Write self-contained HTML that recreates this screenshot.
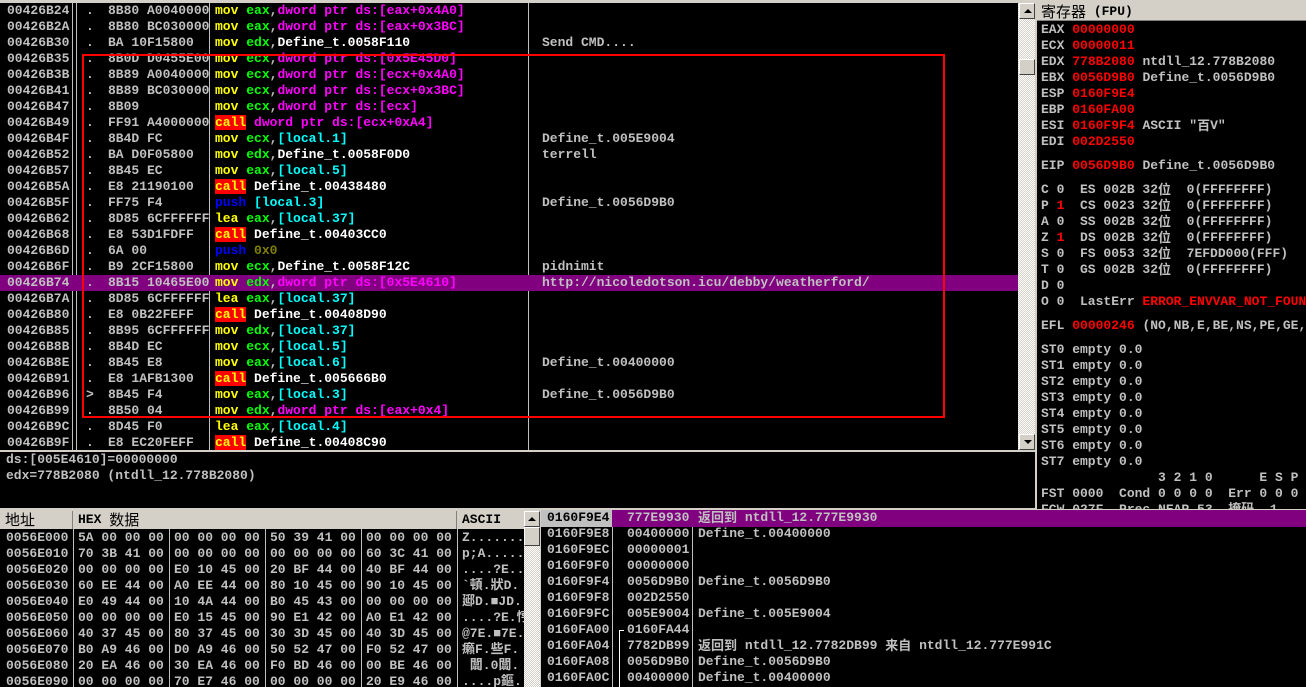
<!DOCTYPE html>
<html><head><meta charset="utf-8"><style>
*{margin:0;padding:0;box-sizing:border-box}
body{width:1306px;height:687px;background:#d4d0c8;position:relative;overflow:hidden;font-family:"Liberation Mono","Noto Sans CJK SC",monospace;font-size:13px;font-weight:bold;color:#c0c0c0}
.a{position:absolute}
.r{position:absolute;height:16px;line-height:16px;white-space:pre;overflow:hidden}
.r span,.r b{position:absolute;top:0;white-space:pre;font-weight:bold}
.bk{background:#000}
.vl{position:absolute;width:1px;background:#c0c0c0}
.y{color:#ff0}.g{color:#0f0}.m{color:#f0f}.c{color:#0ff}.w{color:#fff}.bl{color:#00f}.o{color:#808000}.rd{color:#f00}
.call{background:#f00;color:#ff0}
.hatch{background:repeating-conic-gradient(#fff 0 25%,#d4d0c8 0 50%) 0 0/2px 2px}
.btn{position:absolute;background:#d4d0c8;border:1px solid;border-color:#fff #404040 #404040 #fff}
.cj{font-family:"Noto Sans CJK SC","WenQuanYi Zen Hei",sans-serif;font-weight:normal;line-height:1;vertical-align:top}
</style></head><body>

<div class="a bk" style="left:0;top:3px;width:1018px;height:447px;overflow:hidden">
<div class="vl" style="left:72px;top:0;height:447px"></div>
<div class="vl" style="left:76px;top:0;height:447px"></div>
<div class="vl" style="left:209px;top:0;height:447px"></div>
<div class="vl" style="left:528px;top:0;height:447px"></div>
<div id="dis"></div>
</div>
<div class="a" style="left:82px;top:54px;width:863px;height:364px;border:2px solid #f00"></div>

<div class="a hatch" style="left:1018px;top:3px;width:17px;height:447px"></div>
<div class="btn" style="left:1019px;top:3px;width:16px;height:16px"><div class="a" style="left:4px;top:5px;border-left:4px solid transparent;border-right:4px solid transparent;border-bottom:4px solid #000"></div></div>
<div class="btn" style="left:1019px;top:59px;width:16px;height:16px"></div>
<div class="btn" style="left:1019px;top:434px;width:16px;height:16px"><div class="a" style="left:4px;top:5px;border-left:4px solid transparent;border-right:4px solid transparent;border-top:4px solid #000"></div></div>

<div class="a bk" style="left:0;top:452px;width:1035px;height:56px">
<div class="r" style="left:6px;top:0">ds:[005E4610]=00000000</div>
<div class="r" style="left:6px;top:16px">edx=778B2080 (ntdll_12.778B2080)</div>
</div>

<div class="a bk" style="left:1037px;top:3px;width:269px;height:506px;overflow:hidden">
<div class="a" style="left:0;top:0;width:269px;height:18px;background:#d4d0c8;border-bottom:1px solid #808080;color:#000;line-height:18px;white-space:pre;padding-left:4px"><span class="cj" style="font-size:15px;line-height:18px">寄存器</span> (FPU)</div>
<div id="reg"></div>
</div>

<div class="a bk" style="left:0;top:511px;width:524px;height:176px;overflow:hidden">
<div class="a" style="left:0;top:0;width:524px;height:18px;background:#d4d0c8;color:#000"></div>
<div class="a" style="left:0;top:0;width:73px;height:18px;border-right:1px solid #808080;color:#000;line-height:18px;padding-left:5px"><span class="cj" style="font-size:15px;line-height:18px">地址</span></div>
<div class="a" style="left:74px;top:0;width:383px;height:18px;border-right:1px solid #808080;color:#000;line-height:18px;padding-left:4px;white-space:pre">HEX <span class="cj" style="font-size:15px;line-height:18px">数据</span></div>
<div class="a" style="left:458px;top:0;width:66px;height:18px;color:#000;line-height:18px;padding-left:4px">ASCII</div>
<div class="vl" style="left:73px;top:18px;height:160px"></div>
<div class="vl" style="left:169px;top:18px;height:160px"></div>
<div class="vl" style="left:265px;top:18px;height:160px"></div>
<div class="vl" style="left:361px;top:18px;height:160px"></div>
<div class="vl" style="left:457px;top:18px;height:160px"></div>
<div id="dmp"></div>
</div>
<div class="a hatch" style="left:524px;top:511px;width:16px;height:176px"></div>
<div class="btn" style="left:524px;top:511px;width:16px;height:16px"><div class="a" style="left:3px;top:5px;border-left:4px solid transparent;border-right:4px solid transparent;border-bottom:4px solid #000"></div></div>
<div class="btn" style="left:524px;top:527px;width:16px;height:19px"></div>

<div class="a bk" style="left:541px;top:510px;width:765px;height:177px;overflow:hidden">
<div class="vl" style="left:71px;top:0;height:177px"></div>
<div class="vl" style="left:151px;top:0;height:177px"></div>
<div class="a" style="left:71px;top:0;width:694px;height:17px;background:#800080"></div>
<div class="a" style="left:0;top:0;width:71px;height:17px;background:#c0c0c0"></div>
<div class="vl" style="left:78px;top:120px;height:57px;background:#fff"></div>
<div class="a" style="left:78px;top:120px;width:5px;height:1px;background:#fff"></div>
<div id="stk"></div>
</div>

<script>
function esc(s){return s.replace(/&/g,'&amp;').replace(/</g,'&lt;')}
var D=[
["00426B24",".","8B80 A0040000",'<b class="y">mov</b> <b class="g">eax</b>,<b class="m">dword ptr ds:[eax+0x4A0]</b>',""],
["00426B2A",".","8B80 BC030000",'<b class="y">mov</b> <b class="g">eax</b>,<b class="m">dword ptr ds:[eax+0x3BC]</b>',""],
["00426B30",".","BA 10F15800",'<b class="y">mov</b> <b class="g">edx</b>,<b class="w">Define_t.0058F110</b>',"Send CMD...."],
["00426B35",".","8B0D D0455E00",'<b class="y">mov</b> <b class="g">ecx</b>,<b class="m">dword ptr ds:[0x5E45D0]</b>',""],
["00426B3B",".","8B89 A0040000",'<b class="y">mov</b> <b class="g">ecx</b>,<b class="m">dword ptr ds:[ecx+0x4A0]</b>',""],
["00426B41",".","8B89 BC030000",'<b class="y">mov</b> <b class="g">ecx</b>,<b class="m">dword ptr ds:[ecx+0x3BC]</b>',""],
["00426B47",".","8B09",'<b class="y">mov</b> <b class="g">ecx</b>,<b class="m">dword ptr ds:[ecx]</b>',""],
["00426B49",".","FF91 A4000000",'<b class="call">call</b> <b class="m">dword ptr ds:[ecx+0xA4]</b>',""],
["00426B4F",".","8B4D FC",'<b class="y">mov</b> <b class="g">ecx</b>,<b class="c">[local.1]</b>',"Define_t.005E9004"],
["00426B52",".","BA D0F05800",'<b class="y">mov</b> <b class="g">edx</b>,<b class="w">Define_t.0058F0D0</b>',"terrell"],
["00426B57",".","8B45 EC",'<b class="y">mov</b> <b class="g">eax</b>,<b class="c">[local.5]</b>',""],
["00426B5A",".","E8 21190100",'<b class="call">call</b> <b class="w">Define_t.00438480</b>',""],
["00426B5F",".","FF75 F4",'<b class="bl">push</b> <b class="c">[local.3]</b>',"Define_t.0056D9B0"],
["00426B62",".","8D85 6CFFFFFF",'<b class="y">lea</b> <b class="g">eax</b>,<b class="c">[local.37]</b>',""],
["00426B68",".","E8 53D1FDFF",'<b class="call">call</b> <b class="w">Define_t.00403CC0</b>',""],
["00426B6D",".","6A 00",'<b class="bl">push</b> <b class="o">0x0</b>',""],
["00426B6F",".","B9 2CF15800",'<b class="y">mov</b> <b class="g">ecx</b>,<b class="w">Define_t.0058F12C</b>',"pidnimit"],
["00426B74",".","8B15 10465E00",'<b class="y">mov</b> <b class="g">edx</b>,<b class="m">dword ptr ds:[0x5E4610]</b>',"http://nicoledotson.icu/debby/weatherford/"],
["00426B7A",".","8D85 6CFFFFFF",'<b class="y">lea</b> <b class="g">eax</b>,<b class="c">[local.37]</b>',""],
["00426B80",".","E8 0B22FEFF",'<b class="call">call</b> <b class="w">Define_t.00408D90</b>',""],
["00426B85",".","8B95 6CFFFFFF",'<b class="y">mov</b> <b class="g">edx</b>,<b class="c">[local.37]</b>',""],
["00426B8B",".","8B4D EC",'<b class="y">mov</b> <b class="g">ecx</b>,<b class="c">[local.5]</b>',""],
["00426B8E",".","8B45 E8",'<b class="y">mov</b> <b class="g">eax</b>,<b class="c">[local.6]</b>',"Define_t.00400000"],
["00426B91",".","E8 1AFB1300",'<b class="call">call</b> <b class="w">Define_t.005666B0</b>',""],
["00426B96",">","8B45 F4",'<b class="y">mov</b> <b class="g">eax</b>,<b class="c">[local.3]</b>',"Define_t.0056D9B0"],
["00426B99",".","8B50 04",'<b class="y">mov</b> <b class="g">edx</b>,<b class="m">dword ptr ds:[eax+0x4]</b>',""],
["00426B9C",".","8D45 F0",'<b class="y">lea</b> <b class="g">eax</b>,<b class="c">[local.4]</b>',""],
["00426B9F",".","E8 EC20FEFF",'<b class="call">call</b> <b class="w">Define_t.00408C90</b>',""]];
var h="";
D.forEach(function(r,i){
 var hl=i==17?'background:#800080;':'';
 h+='<div class="r" style="left:0;top:'+(i*16)+'px;width:1018px;'+hl+'"><span style="left:7px">'+r[0]+'</span><span style="left:86px">'+r[1]+'</span><span style="left:108px;width:101px;overflow:hidden">'+r[2]+'</span><span style="left:215px">'+r[3].replace(/<b /g,'<b style="position:static" ')+'</span><span style="left:542px">'+esc(r[4])+'</span></div>';
});
document.getElementById('dis').innerHTML=h;

var R=[[19,'EAX <b class="rd">00000000</b>'],[35,'ECX <b class="rd">00000011</b>'],[51,'EDX <b class="rd">778B2080</b> ntdll_12.778B2080'],[67,'EBX <b class="rd">0056D9B0</b> Define_t.0056D9B0'],[83,'ESP <b class="rd">0160F9E4</b>'],[99,'EBP <b class="rd">0160FA00</b>'],[115,'ESI <b class="rd">0160F9F4</b> ASCII "<b class="cj">百</b>V"'],[131,'EDI <b class="rd">002D2550</b>'],
[155,'EIP <b class="rd">0056D9B0</b> Define_t.0056D9B0'],
[179,'C 0  ES 002B 32<b class="cj">位</b>  0(FFFFFFFF)'],[195,'P <b class="rd">1</b>  CS 0023 32<b class="cj">位</b>  0(FFFFFFFF)'],[211,'A 0  SS 002B 32<b class="cj">位</b>  0(FFFFFFFF)'],[227,'Z <b class="rd">1</b>  DS 002B 32<b class="cj">位</b>  0(FFFFFFFF)'],[243,'S 0  FS 0053 32<b class="cj">位</b>  7EFDD000(FFF)'],[259,'T 0  GS 002B 32<b class="cj">位</b>  0(FFFFFFFF)'],[275,'D 0'],[291,'O 0  LastErr <b class="rd">ERROR_ENVVAR_NOT_FOUND</b>'],
[315,'EFL <b class="rd">00000246</b> (NO,NB,E,BE,NS,PE,GE,G)'],
[339,'ST0 empty 0.0'],[355,'ST1 empty 0.0'],[371,'ST2 empty 0.0'],[387,'ST3 empty 0.0'],[403,'ST4 empty 0.0'],[419,'ST5 empty 0.0'],[435,'ST6 empty 0.0'],[451,'ST7 empty 0.0'],
[467,'               3 2 1 0      E S P'],[483,'FST 0000  Cond 0 0 0 0  Err 0 0 0'],[499,'FCW 027F  Prec NEAR,53  掩码  1']];
h="";R.forEach(function(r){h+='<div class="r" style="left:4px;top:'+r[0]+'px;width:265px">'+r[1].replace(/<b /g,'<b style="position:static" ')+'</div>'});
document.getElementById('reg').innerHTML=h;

var M=[["0056E000","5A 00 00 00","00 00 00 00","50 39 41 00","00 00 00 00","Z......."],
["0056E010","70 3B 41 00","00 00 00 00","00 00 00 00","60 3C 41 00","p;A....."],
["0056E020","00 00 00 00","E0 10 45 00","20 BF 44 00","40 BF 44 00","....?E.."],
["0056E030","60 EE 44 00","A0 EE 44 00","80 10 45 00","90 10 45 00","`頓.狀D."],
["0056E040","E0 49 44 00","10 4A 44 00","B0 45 43 00","00 00 00 00","郔D.■JD."],
["0056E050","00 00 00 00","E0 15 45 00","90 E1 42 00","A0 E1 42 00","....?E.悙"],
["0056E060","40 37 45 00","80 37 45 00","30 3D 45 00","40 3D 45 00","@7E.■7E."],
["0056E070","B0 A9 46 00","D0 A9 46 00","50 52 47 00","F0 52 47 00","癩F.些F."],
["0056E080","20 EA 46 00","30 EA 46 00","F0 BD 46 00","00 BE 46 00"," 闒.0闒."],
["0056E090","00 00 00 00","70 E7 46 00","00 00 00 00","20 E9 46 00","....p鏂."]];
h="";M.forEach(function(r,i){var t=19+i*16;h+='<div class="r" style="left:0;top:'+t+'px;width:524px"><span style="left:6px">'+r[0]+'</span><span style="left:78px">'+r[1]+'</span><span style="left:174px">'+r[2]+'</span><span style="left:270px">'+r[3]+'</span><span style="left:366px">'+r[4]+'</span><span style="left:462px;width:62px;overflow:hidden">'+esc(r[5])+'</span></div>'});
document.getElementById('dmp').innerHTML=h;

var S=[["0160F9E4","777E9930",'<b class="cj">返回到</b> ntdll_12.777E9930'],["0160F9E8","00400000","Define_t.00400000"],["0160F9EC","00000001",""],["0160F9F0","00000000",""],["0160F9F4","0056D9B0","Define_t.0056D9B0"],["0160F9F8","002D2550",""],["0160F9FC","005E9004","Define_t.005E9004"],["0160FA00","0160FA44",""],["0160FA04","7782DB99",'<b class="cj">返回到</b> ntdll_12.7782DB99 <b class="cj">来自</b> ntdll_12.777E991C'],["0160FA08","0056D9B0","Define_t.0056D9B0"],["0160FA0C","00400000","Define_t.00400000"]];
h="";S.forEach(function(r,i){var t=i*16;h+='<div class="r" style="left:0;top:'+t+'px;width:765px'+(i==0?';color:#c0c0c0':'')+'"><span style="left:6px'+(i==0?';color:#000':'')+'">'+r[0]+'</span><span style="left:86px">'+r[1]+'</span><span style="left:157px">'+r[2].replace(/<b /g,'<b style="position:static" ')+'</span></div>'});
document.getElementById('stk').innerHTML=h;
</script>
</body></html>
